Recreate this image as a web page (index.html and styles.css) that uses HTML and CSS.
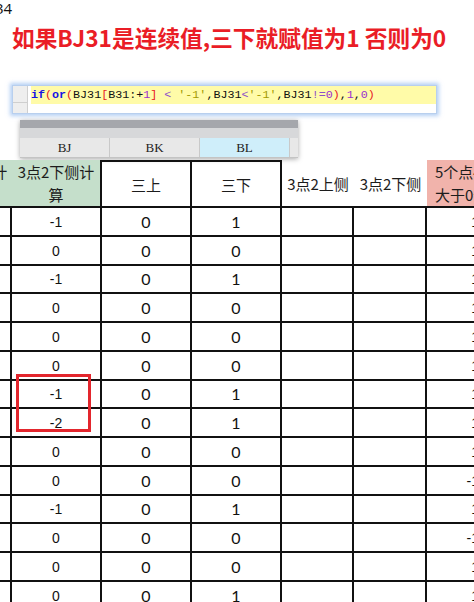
FILE: index.html
```html
<!DOCTYPE html>
<html lang="zh-CN">
<head>
<meta charset="utf-8">
<title>三下赋值公式</title>
<link rel="stylesheet" href="styles.css">
</head>
<body>
<div class="cellref">34</div>
<h1 class="title">如果BJ31是连续值,三下就赋值为1 否则为0</h1>

<div class="formula">
  <div class="gutter"><span class="g1"></span><span class="g2"></span></div>
  <div class="editor">
    <div class="line active"><span class="kw">if</span><span class="pr">(</span><span class="kw">or</span><span class="pr">(</span>BJ31<span class="pr">[</span>B31:+<span class="nm">1</span><span class="pr">]</span> <span class="op">&lt;</span> <span class="st">'-1'</span>,BJ31<span class="op">&lt;</span><span class="st">'-1'</span>,BJ31<span class="op">!=</span><span class="nm">0</span><span class="pr">)</span>,<span class="nm">1</span>,<span class="nm">0</span><span class="pr">)</span></div>
    <div class="line"></div>
  </div>
</div>

<div class="colpop">
  <div class="band dark"></div>
  <div class="band light"></div>
  <div class="heads">
    <span class="h">BJ</span>
    <span class="h">BK</span>
    <span class="h sel">BL</span>
    <span class="h rest"></span>
  </div>
</div>

<div class="sheet">
  <div class="grid">
    <div class="hd green">3点2上侧计<br>算</div>
    <div class="hd green rb">3点2下侧计<br>算</div>
    <div class="hd boxed rb">三上</div>
    <div class="hd boxed rb">三下</div>
    <div class="hd">3点2上侧</div>
    <div class="hd">3点2下侧</div>
    <div class="hd pink">5个点4个<br>大于0个数</div>
  </div>
  <div class="grid" id="rows"></div>
  <div class="mark"></div>
</div>

<script src="app.js"></script>
</body>
</html>
```

FILE: app.js
```js
const c2 = ["-1","0","-1","0","0","0","-1","-2","0","0","-1","0","0","0"];
const c4 = ["1","0","1","0","0","0","1","1","0","0","1","0","0","1"];
const c7 = ["1","1","1","1","1","1","1","1","1","-1","1","-1","1","1"];
const rows = document.getElementById("rows");
for (let i = 0; i < c2.length; i++) {
  const cells = [
    ["c", ""],
    ["c thin", c2[i]],
    ["c sans", "0"],
    ["c sans", c4[i]],
    ["c", ""],
    ["c", ""],
    ["c thin right", c7[i]]
  ];
  for (const [cls, txt] of cells) {
    const d = document.createElement("div");
    d.className = cls;
    d.textContent = txt;
    rows.appendChild(d);
  }
}
```

FILE: styles.css
```css
html, body {
  margin: 0;
  padding: 0;
  background: #fff;
  overflow: hidden;
  width: 474px;
  height: 602px;
}
body {
  font-family: "Noto Sans CJK SC", "Noto Sans", sans-serif;
  color: #111;
}
.cellref {
  font-family: "Open Sans", "Noto Sans", sans-serif;
  font-size: 15px;
  line-height: 16px;
  height: 16px;
  margin-left: -5px;
  color: #111;
}
.title {
  margin: 7px 0 0 12px;
  font-size: 22.7px;
  line-height: 30px;
  font-weight: 700;
  color: #ea1d26;
  white-space: nowrap;
}
.formula {
  margin: 32px 0 0 12px;
  width: 425px;
  height: 29px;
  box-sizing: border-box;
  border: 1px solid #b8cfee;
  box-shadow: 0 0 4px 2px rgba(120, 170, 235, 0.55);
  background: #fff;
  display: flex;
}
.gutter {
  width: 14px;
  background: #eeeeee;
  border-right: 1px solid #cfcfcf;
  display: flex;
  flex-direction: column;
}
.g1 { height: 16px; border-bottom: 1px solid #cfcfcf; }
.g2 { flex: 1; }
.editor {
  flex: 1;
  margin-left: 3px;
  display: flex;
  flex-direction: column;
}
.line {
  height: 18px;
  line-height: 18px;
  font-family: "Liberation Mono", monospace;
  font-size: 11.7px;
  color: #111;
  white-space: pre;
}
.line.active { background: #fffba8; }
.kw { color: #1414e6; font-weight: 700; }
.pr { color: #e8161e; }
.nm { color: #9a2fd0; }
.op { color: #8c4fc8; }
.st { color: #a39a00; }

.colpop {
  margin: 6px 0 0 20px;
  width: 278px;
  height: 38px;
  background: #e8e8e8;
  box-shadow: 0 1px 5px rgba(0, 0, 0, 0.35);
  display: flex;
  flex-direction: column;
}
.band.dark { height: 8px; background: #a5a7ac; }
.band.light { height: 10px; background: #d7d8da; }
.heads {
  flex: 1;
  display: flex;
  border-bottom: 1px solid #c4c4c4;
}
.h {
  width: 89px;
  border-right: 1px solid #c9c9c9;
  font-family: "Liberation Serif", serif;
  font-size: 13px;
  line-height: 19px;
  text-align: center;
  color: #222;
}
.h.sel { background: #cfeefa; }
.h.rest { flex: 1; border-right: 0; }

.sheet {
  position: relative;
  margin-top: 2px;
}
.grid {
  display: grid;
  grid-template-columns: 86px 90px 90px 90px 72px 73px 60px;
  margin-left: -74px;
}
#rows { grid-auto-rows: 28.75px; }
.hd {
  height: 48px;
  box-sizing: border-box;
  border-bottom: 2px solid #111;
  display: flex;
  align-items: center;
  justify-content: center;
  text-align: center;
  font-size: 15px;
  line-height: 23px;
  color: #1c1c1c;
  white-space: nowrap;
  overflow: hidden;
}
.hd.green { background: #c5dfcb; }
.hd.pink {
  background: #f1b3ab;
  justify-content: flex-start;
  text-align: left;
  padding-left: 8px;
}
.hd.boxed { border-top: 2px solid #111; }
.hd.rb { border-right: 2px solid #111; }

.c {
  box-sizing: border-box;
  border-right: 2px solid #111;
  border-bottom: 2px solid #111;
  display: flex;
  align-items: center;
  justify-content: center;
  overflow: hidden;
  color: #111;
}
.c.thin {
  font-family: "Liberation Sans", Arial, sans-serif;
  font-size: 14px;
  padding-top: 1px;
}
.c.sans {
  font-family: Lato, "Liberation Sans", sans-serif;
  font-size: 16px;
}
.c.right {
  justify-content: flex-end;
  padding-right: 6px;
}
.mark {
  position: absolute;
  left: 16px;
  top: 214px;
  width: 75px;
  height: 58px;
  box-sizing: border-box;
  border: 3px solid #e3262d;
}
```
